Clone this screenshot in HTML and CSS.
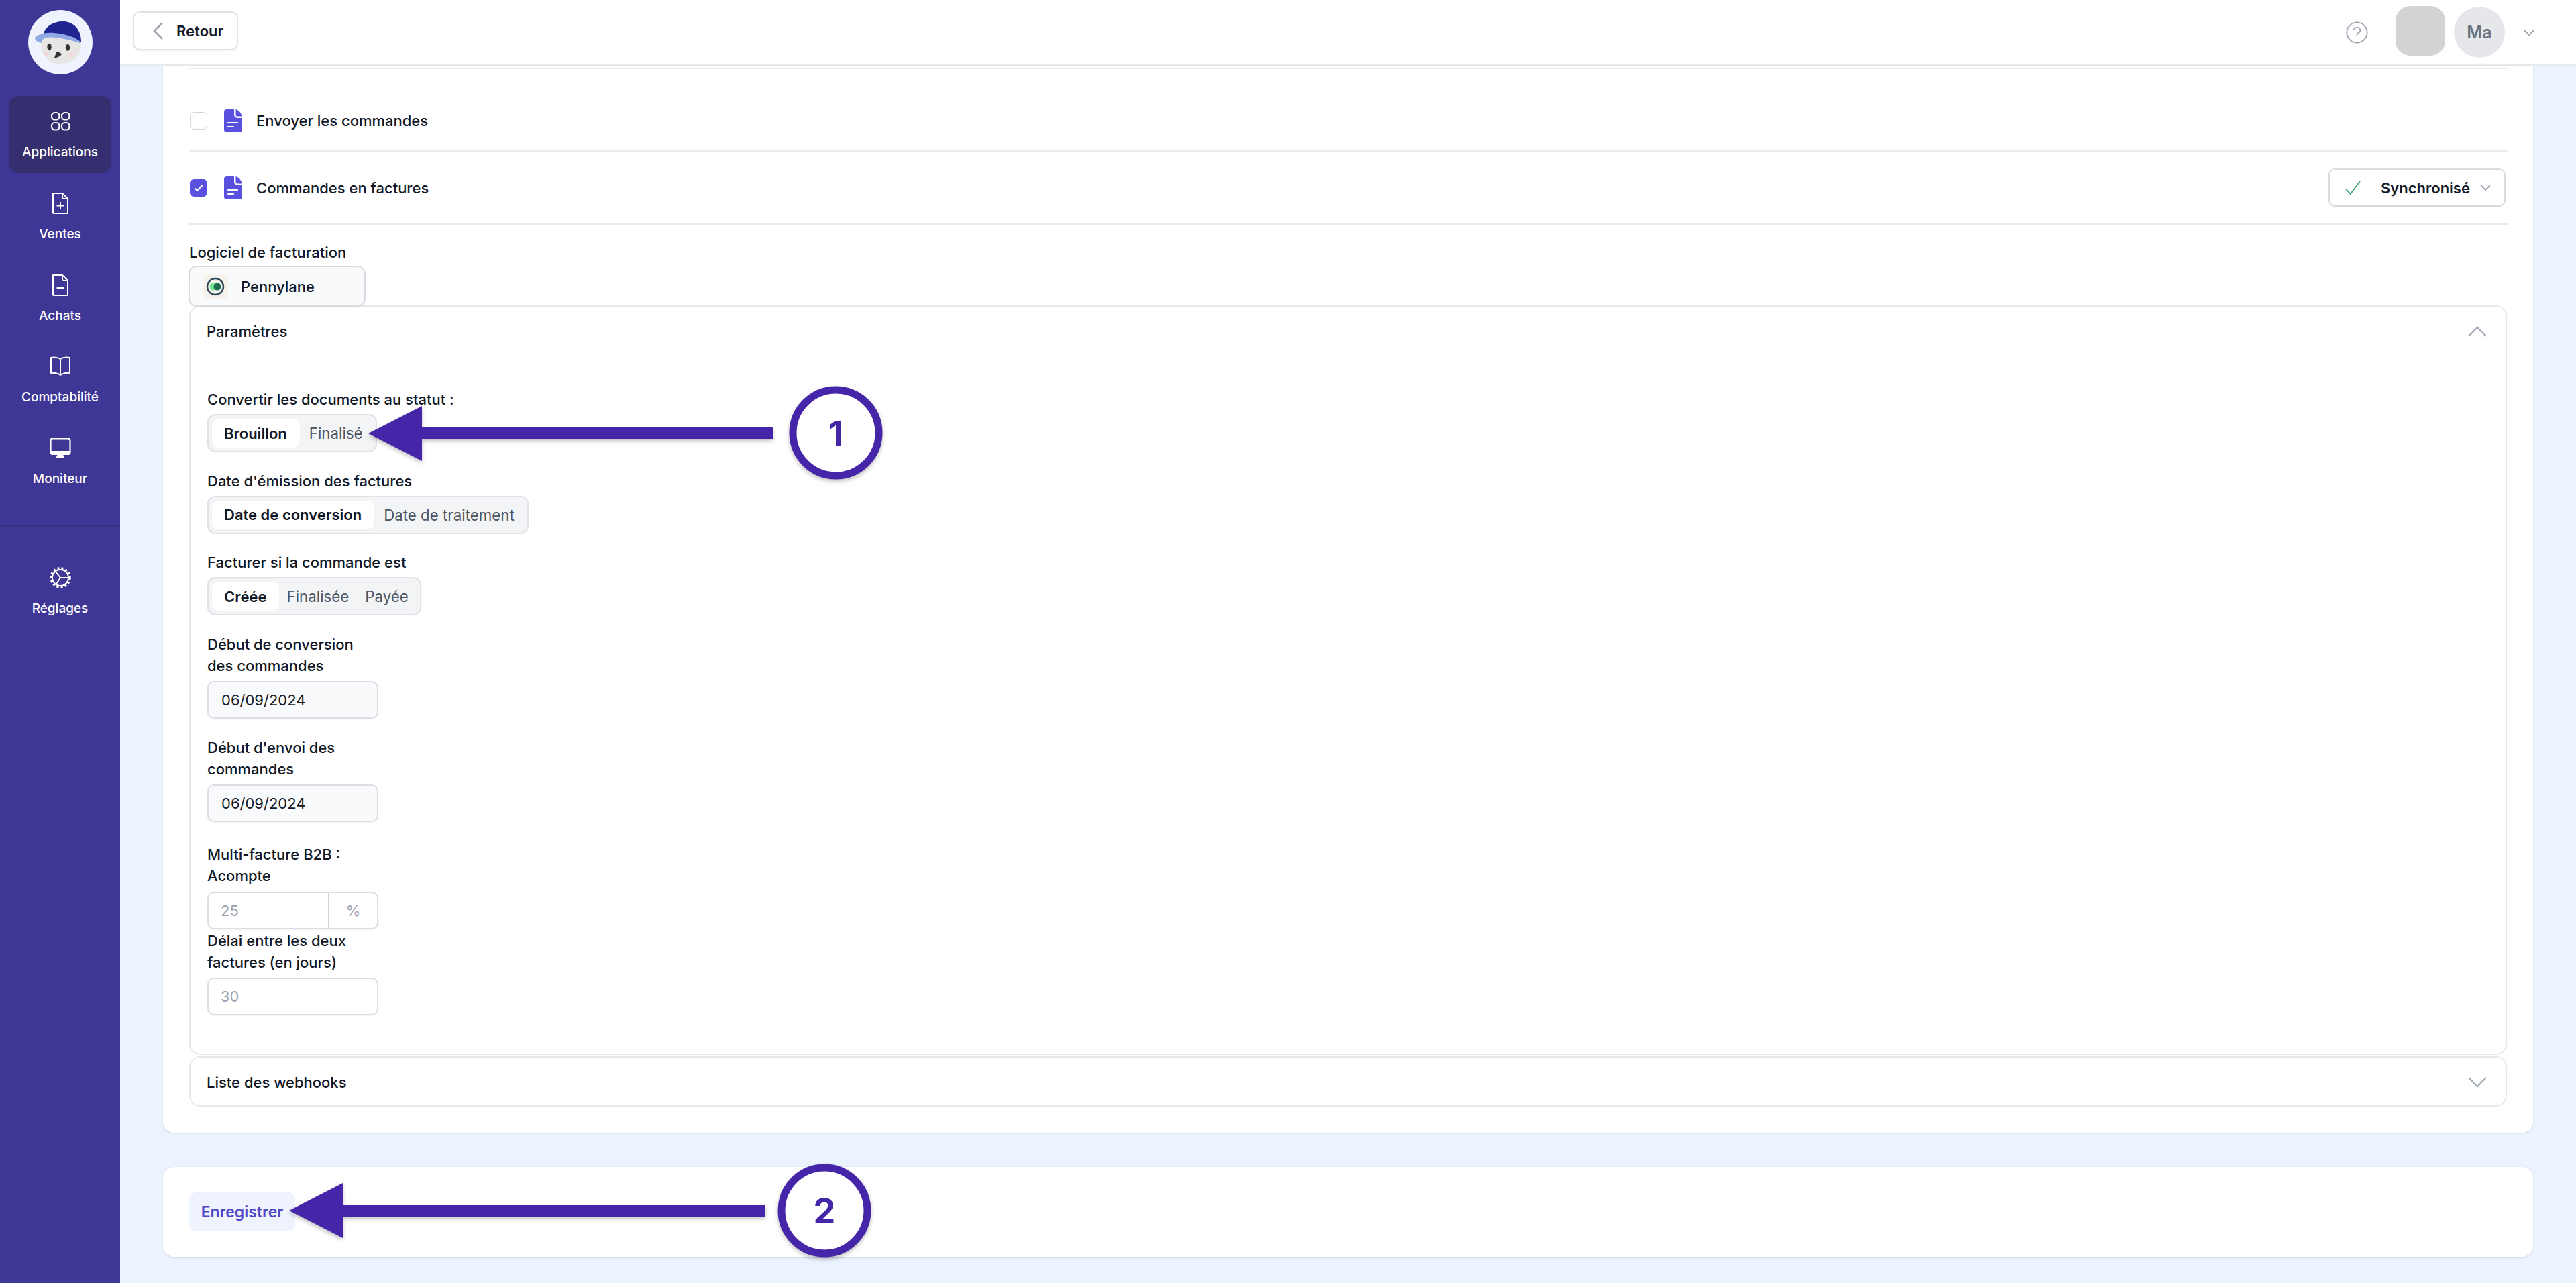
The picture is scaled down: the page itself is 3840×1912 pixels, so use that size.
FILE: index.html
```html
<!DOCTYPE html>
<html lang="fr">
  <head>
    <meta charset="UTF-8" />
    <meta name="viewport" content="width=device-width, initial-scale=1.0" />
    <title>Applications</title>
    <link rel="stylesheet" href="styles.css">
  </head>
  <body>
    <div class="app">
      <aside class="sidebar">
        <svg class="logo" viewBox="42 15 96 96">
          <circle cx="90" cy="63" r="48" fill="#eff3fe" />
          <circle cx="91" cy="66" r="30" fill="#e8e6e4" />
          <path d="M64 52c3-12 14-20 30-20 14 0 27 10 27 30l-2 1C100 52 84 49 64 52z" fill="#1f2490" />
          <path d="M52 57c3-6 16-9 28-8 16 1 32 6 40 13l-1 2C100 58 82 54 66 56l-5 8c-4-1-9-4-9-7z" fill="#8fa9e5" />
          <ellipse cx="73.500" cy="70" rx="3.200" ry="5.200" fill="#333" />
          <ellipse cx="101" cy="71" rx="3.200" ry="5" fill="#333" />
          <ellipse cx="69" cy="80.500" rx="3.500" ry="3" fill="#f5d5d6" />
          <ellipse cx="106" cy="82" rx="3.500" ry="3" fill="#f5d5d6" />
          <path d="M81 86l3-8c3-1 6 0 8 3-3 4-7 5-11 5z" fill="#333" />
        </svg>
        <nav class="nav">
          <a class="nav-item active">
            <svg class="nav-icon" viewBox="0 0 32 32" fill="none" stroke="#fff" stroke-width="2.200">
              <rect x="3" y="3" width="11.500" height="10.500" rx="4.500" />
              <rect x="18" y="3" width="11.500" height="10.500" rx="4.500" />
              <rect x="3" y="18" width="11.500" height="10.500" rx="4.500" />
              <rect x="18" y="18" width="11.500" height="10.500" rx="4.500" />
            </svg>
            <span>Applications</span>
          </a>
          <a class="nav-item">
            <svg class="nav-icon" viewBox="0 0 32 32" fill="none" stroke="#fff" stroke-width="2">
              <path d="M5 1h14l8 8v21a1 1 0 0 1-1 1H6a1 1 0 0 1-1-1z" stroke-linejoin="round" />
              <path d="M19 1v6a2 2 0 0 0 2 2h6M16 14v11M10.500 19.500h11" />
            </svg>
            <span>Ventes</span>
          </a>
          <a class="nav-item">
            <svg class="nav-icon" viewBox="0 0 32 32" fill="none" stroke="#fff" stroke-width="2">
              <path d="M5 1h14l8 8v21a1 1 0 0 1-1 1H6a1 1 0 0 1-1-1z" stroke-linejoin="round" />
              <path d="M19 1v6a2 2 0 0 0 2 2h6M10.500 20h11" />
            </svg>
            <span>Achats</span>
          </a>
          <a class="nav-item">
            <svg class="nav-icon" viewBox="0 0 32 32" fill="none" stroke="#fff" stroke-width="2" stroke-linejoin="round">
              <path d="M16 5c-3-2-8-3-14-2v23c6-1 10 0 14 3 4-3 8-4 14-3V3c-6-1-11 0-14 2zM16 5v24" />
            </svg>
            <span>Comptabilité</span>
          </a>
          <a class="nav-item">
            <svg class="nav-icon" viewBox="0 0 32 32" fill="none" stroke="#fff" stroke-width="2.200">
              <rect x="1.500" y="1.500" width="29" height="21" rx="3" />
              <path d="M1.500 21h29v1a3 3 0 0 1-3 3h-23a3 3 0 0 1-3-3z" fill="#fff" />
              <path d="M12 25h8l2 6H9z" fill="#fff" stroke="none" />
            </svg>
            <span>Moniteur</span>
          </a>
        </nav>
        <div class="nav-divider"></div>
        <a class="nav-item">
          <svg class="nav-icon" viewBox="0 0 32 32" fill="none" stroke="#fff" stroke-width="2">
            <circle cx="16" cy="16" r="12" />
            <circle cx="16" cy="16" r="14" stroke-width="3.500" stroke-dasharray="3 3.100" />
            <path d="M16 16L9 7M16 16h12M16 16l-6.500 10" />
          </svg>
          <span>Réglages</span>
        </a>
      </aside>

      <div class="main">
        <header class="topbar">
          <button class="back-btn">
            <svg class="back-icon" viewBox="0 0 18 28" fill="none" stroke="#9ca3af" stroke-width="2.500">
              <path d="M15 2L3 14l12 12" />
            </svg>
            Retour
          </button>
          <div class="topbar-right">
            <svg class="help-icon" viewBox="0 0 24 24" fill="none" stroke="#9ca3af" stroke-width="1.300">
              <path d="M8.600 9c.5-1.500 1.900-2.500 3.500-2.500 2 0 3.500 1.300 3.500 3 0 1.400-1 2.300-2.300 2.900-.8.400-1.300 1-1.300 1.900v.7M12 17.200v.6" />
              <circle cx="12" cy="12" r="11" />
            </svg>
            <div class="grey-square"></div>
            <div class="avatar">Ma</div>
            <svg class="chevron user-chevron" viewBox="0 0 16 10" fill="none" stroke="#9ca3af" stroke-width="1.800">
              <path d="M1 1l7 7 7-7" />
            </svg>
          </div>
        </header>

        <div class="content">
          <section class="card settings-card">
            <div class="row row-first">
              <span class="checkbox"></span>
              <svg class="doc-icon" viewBox="0 0 27 34">
                <path d="M4 0h11v8a5 5 0 0 0 5 5h7v17a4 4 0 0 1-4 4H4a4 4 0 0 1-4-4V4a4 4 0 0 1 4-4z" fill="#5a50e0" />
                <path d="M17.500 0c4 1 8 5 9.500 10.500h-7a2.500 2.500 0 0 1-2.500-2.500z" fill="#5a50e0" />
                <path d="M6 20h14M6 26h8" stroke="#fff" stroke-width="2.200" stroke-linecap="round" />
              </svg>
              <span class="row-title">Envoyer les commandes</span>
            </div>
            <div class="row row-second">
              <span class="checkbox checked">
                <svg viewBox="0 0 14 12" fill="none" stroke="#fff" stroke-width="2.200"><path d="M1.500 6.500l3.500 3.500 7.500-8" /></svg>
              </span>
              <svg class="doc-icon" viewBox="0 0 27 34">
                <path d="M4 0h11v8a5 5 0 0 0 5 5h7v17a4 4 0 0 1-4 4H4a4 4 0 0 1-4-4V4a4 4 0 0 1 4-4z" fill="#5a50e0" />
                <path d="M17.500 0c4 1 8 5 9.500 10.500h-7a2.500 2.500 0 0 1-2.500-2.500z" fill="#5a50e0" />
                <path d="M6 20h14M6 26h8" stroke="#fff" stroke-width="2.200" stroke-linecap="round" />
              </svg>
              <span class="row-title">Commandes en factures</span>
              <button class="sync-btn">
                <svg class="sync-check" viewBox="0 0 24 22" fill="none" stroke="#38a169" stroke-width="1.800"><path d="M1 13l7 8L23 1" /></svg>
                <span>Synchronisé</span>
                <svg class="chevron" viewBox="0 0 16 10" fill="none" stroke="#9ca3af" stroke-width="1.800"><path d="M1 1l7 7 7-7" /></svg>
              </button>
            </div>

            <div class="software">
              <div class="software-label">Logiciel de facturation</div>
              <div class="software-select">
                <span class="pl-tile">
                  <svg viewBox="0 0 28 28">
                    <circle cx="14" cy="14" r="12" fill="none" stroke="#2b4858" stroke-width="2.500" />
                    <circle cx="11" cy="14" r="5.500" fill="#71e88f" />
                    <circle cx="17" cy="14" r="5.500" fill="#1f6b50" />
                  </svg>
                </span>
                Pennylane
              </div>
            </div>

            <div class="accordion">
              <div class="accordion-head">
                <span>Paramètres</span>
                <svg class="acc-chevron" viewBox="0 0 28 16" fill="none" stroke="#9ca3af" stroke-width="2"><path d="M1 15L14 2l13 13" /></svg>
              </div>
              <div class="accordion-body">
                <div class="field">
                  <div class="field-label nowrap">Convertir les documents au statut :</div>
                  <div class="segment">
                    <span class="seg-tab on">Brouillon</span>
                    <span class="seg-tab">Finalisé</span>
                  </div>
                </div>
                <div class="field">
                  <div class="field-label nowrap">Date d'émission des factures</div>
                  <div class="segment">
                    <span class="seg-tab on">Date de conversion</span>
                    <span class="seg-tab">Date de traitement</span>
                  </div>
                </div>
                <div class="field">
                  <div class="field-label nowrap">Facturer si la commande est</div>
                  <div class="segment segment-three">
                    <span class="seg-tab on">Créée</span>
                    <span class="seg-tab">Finalisée</span>
                    <span class="seg-tab">Payée</span>
                  </div>
                </div>
                <div class="field">
                  <div class="field-label">Début de conversion des commandes</div>
                  <div class="input filled">06/09/2024</div>
                </div>
                <div class="field field-wide">
                  <div class="field-label">Début d'envoi des commandes</div>
                  <div class="input filled">06/09/2024</div>
                </div>
                <div class="field field-tight">
                  <div class="field-label">Multi-facture B2B : Acompte</div>
                  <div class="input input-group">
                    <span class="input-value">25</span>
                    <span class="input-unit">%</span>
                  </div>
                </div>
                <div class="field">
                  <div class="field-label">Délai entre les deux factures (en jours)</div>
                  <div class="input"><span class="input-value">30</span></div>
                </div>
              </div>
            </div>

            <div class="accordion accordion-closed">
              <div class="accordion-head">
                <span>Liste des webhooks</span>
                <svg class="acc-chevron" viewBox="0 0 28 16" fill="none" stroke="#9ca3af" stroke-width="2"><path d="M1 1l13 13L27 1" /></svg>
              </div>
            </div>
          </section>

          <section class="card save-card">
            <button class="save-btn">Enregistrer</button>
          </section>
        </div>
      </div>

      <!-- annotations posees sur la capture -->
      <div class="callout callout-one">
        <svg viewBox="0 0 780 140">
          <path d="M0 70L80 29v32h523v17H80v33z" />
          <circle cx="697" cy="69" r="64" />
        </svg>
        <span class="callout-num">1</span>
      </div>
      <div class="callout callout-two">
        <svg viewBox="0 0 780 140">
          <path d="M0 70L80 29v33h630v17H80v32z" />
          <circle cx="798" cy="70" r="64" />
        </svg>
        <span class="callout-num">2</span>
      </div>
    </div>
  </body>
</html>
```

FILE: styles.css
```css
* {
  box-sizing: border-box;
}
html,
body {
  margin: 0;
  height: 100%;
  overflow: hidden;
}
body {
  font-family: Inter, "Noto Sans", sans-serif;
  font-size: 22px;
  color: #111827;
  background: #ebf3fe;
}
button {
  font-family: inherit;
}
.app {
  position: relative;
  display: flex;
  height: 1912px;
}

/* sidebar */
.sidebar {
  width: 179px;
  flex: none;
  background: #3f3795;
  padding: 15px 13px 0;
  display: flex;
  flex-direction: column;
  align-items: center;
}
.logo {
  width: 96px;
  height: 96px;
  flex: none;
  margin-bottom: 32px;
}
.nav {
  display: flex;
  flex-direction: column;
  gap: 6.750px;
  width: 100%;
}
.nav-item {
  display: flex;
  flex-direction: column;
  align-items: center;
  height: 115px;
  width: 100%;
  padding-top: 22px;
  border-radius: 14px;
  color: #fff;
  font-size: 19px;
  font-weight: 500;
}
.nav-item.active {
  background: #352f70;
}
.nav-icon {
  width: 32px;
  height: 32px;
  margin-bottom: 18px;
}
.nav-divider {
  height: 1px;
  width: 179px;
  margin: 38px 0 39px;
  background: #352f70;
  flex: none;
}

/* header */
.main {
  flex: 1;
  min-width: 0;
  display: flex;
  flex-direction: column;
}
.topbar {
  height: 98px;
  flex: none;
  display: flex;
  align-items: center;
  justify-content: space-between;
  background: #fff;
  border-bottom: 2px solid #e7eaee;
  padding: 0 62px 4px 19px;
}
.back-btn {
  display: flex;
  align-items: center;
  width: 157px;
  height: 58px;
  padding: 0 0 0 27px;
  background: #fff;
  border: 2px solid #e0e2e7;
  border-radius: 10px;
  font-size: 22px;
  font-weight: 600;
  color: #111827;
  box-shadow: 0 1px 2px #0000000d;
}
.back-icon {
  width: 18px;
  height: 28px;
  margin-right: 18px;
}
.topbar-right {
  display: flex;
  align-items: center;
}
.help-icon {
  width: 33px;
  height: 33px;
  margin-right: 41px;
  margin-top: 4px;
}
.grey-square {
  width: 74px;
  height: 74px;
  border-radius: 22px;
  background: #d3d3d3;
  margin-right: 13px;
}
.avatar {
  width: 76px;
  height: 76px;
  border-radius: 50%;
  background: #e5e7eb;
  color: #6b7280;
  font-size: 25px;
  font-weight: 600;
  display: flex;
  align-items: center;
  justify-content: center;
  margin-top: 4px;
}
.chevron {
  width: 16px;
  height: 10px;
  flex: none;
}
.user-chevron {
  margin-left: 28px;
  margin-top: 6px;
}

/* cards */
.content {
  padding: 0 64px;
  display: flex;
  flex-direction: column;
  gap: 51px;
}
.card {
  background: #fff;
  border-radius: 16px;
  box-shadow: 0 1px 3px #0000001f;
}
.settings-card {
  border-radius: 0 0 16px 16px;
  padding: 3px 38px 39px 39px;
}
.row {
  display: flex;
  align-items: center;
  font-weight: 500;
  border-bottom: 2px solid #e9ebef;
}
.row-first {
  height: 125px;
  padding-top: 32px;
  border-top: 2px solid #e9ebef;
}
.row-second {
  height: 109px;
}
.checkbox {
  width: 26px;
  height: 26px;
  border: 1.500px solid #d1d5db;
  border-radius: 6px;
  margin-left: 1px;
  flex: none;
  display: flex;
  align-items: center;
  justify-content: center;
}
.checkbox.checked {
  background: #5a50e0;
  border-color: #5a50e0;
}
.checkbox svg {
  width: 14px;
  height: 12px;
}
.doc-icon {
  width: 27px;
  height: 34px;
  margin: 0 21px 0 25px;
  flex: none;
}
.sync-btn {
  margin-left: auto;
  margin-right: 3px;
  width: 264px;
  height: 57px;
  display: flex;
  align-items: center;
  padding: 0 20px 0 23px;
  background: #fff;
  border: 2px solid #d9dbe1;
  border-radius: 10px;
  font-size: 22px;
  font-weight: 600;
  color: #111827;
  box-shadow: 0 1px 2px #0000000d;
}
.sync-check {
  width: 23px;
  height: 21px;
  margin-right: 30px;
}
.sync-btn .chevron {
  margin-left: auto;
}
.software {
  padding-top: 25px;
}
.software-label {
  line-height: 32px;
  margin-bottom: 4px;
  font-weight: 500;
}
.software-select {
  display: flex;
  align-items: center;
  width: 264px;
  height: 61px;
  margin-left: -1px;
  padding-left: 19px;
  background: #f9fafb;
  border: 2px solid #d9dbe1;
  border-radius: 12px;
  font-weight: 500;
  position: relative;
  z-index: 1;
}
.pl-tile {
  width: 38px;
  height: 38px;
  border-radius: 7px;
  background: #f6f2ec;
  display: flex;
  align-items: center;
  justify-content: center;
  margin-right: 19px;
}
.pl-tile svg {
  width: 28px;
  height: 28px;
}

/* accordions */
.accordion {
  border: 2px solid #e7e8ee;
  border-radius: 16px;
  height: 1117px;
  margin-top: -2px;
  margin-right: 1px;
}
.accordion-closed {
  height: 75px;
  margin-top: 2px;
}
.accordion-head {
  display: flex;
  align-items: center;
  justify-content: space-between;
  height: 73px;
  padding: 0 28px 0 24px;
  font-weight: 500;
}
.acc-chevron {
  width: 28px;
  height: 16px;
}
.accordion-body {
  padding: 49px 0 0 25px;
}
.field {
  margin-bottom: 26.500px;
}
.field-wide {
  margin-bottom: 32px;
}
.field-tight {
  margin-bottom: 1px;
}
.field-label {
  width: 235px;
  line-height: 32px;
  margin-bottom: 7.500px;
  font-weight: 500;
}
.nowrap {
  width: auto;
  white-space: nowrap;
  margin-bottom: 6px;
}
.segment {
  display: inline-flex;
  vertical-align: top;
  height: 57px;
  padding: 5px;
  background: #f3f4f6;
  border: 2px solid #e0e2e7;
  border-radius: 12px;
  color: #4b5563;
}
.seg-tab {
  display: flex;
  align-items: center;
  padding: 0 14px;
  font-size: 22.300px;
}
.seg-tab.on {
  background: #fff;
  border-radius: 10px;
  padding: 0 19px 0 18px;
  color: #111827;
  font-size: 22px;
  font-weight: 600;
}
.segment-three .seg-tab {
  padding: 0 12px;
}
.segment-three .seg-tab.on {
  padding: 0 18px;
}
.input {
  width: 255px;
  height: 56px;
  display: flex;
  align-items: center;
  border: 2px solid #dcdee4;
  border-radius: 10px;
  background: #fff;
  box-shadow: 0 1px 2px #0000000d;
}
.input.filled {
  background: #f9fafb;
  padding-left: 19px;
  color: #111827;
}
.input-value {
  flex: 1;
  padding-left: 18px;
  color: #9ca3af;
}
.input-unit {
  width: 73px;
  height: 100%;
  display: flex;
  align-items: center;
  justify-content: center;
  border-left: 2px solid #d1d5db;
  color: #9ca3af;
}
.save-card {
  padding: 38px 39px;
  height: 134px;
}
.save-btn {
  width: 158px;
  height: 58px;
  padding: 0;
  border: 0;
  border-radius: 10px;
  background: #eff3fe;
  color: #4f46c8;
  font-size: 23px;
  font-weight: 600;
}

/* fleches */
.callout {
  position: absolute;
  pointer-events: none;
}
.callout svg {
  display: block;
  width: 780px;
  height: 140px;
  overflow: visible;
  filter: drop-shadow(0 3px 3px #00000040);
}
.callout path {
  fill: #4526a8;
}
.callout circle {
  fill: #fff;
  stroke: #4526a8;
  stroke-width: 11;
}
.callout-one {
  left: 549px;
  top: 576px;
}
.callout-two {
  left: 431px;
  top: 1734px;
}
.callout-num {
  position: absolute;
  top: 0;
  width: 128px;
  height: 140px;
  display: flex;
  align-items: center;
  justify-content: center;
  color: #4526a8;
  font-size: 52px;
  font-weight: 700;
}
.callout-one .callout-num {
  left: 633px;
}
.callout-two .callout-num {
  left: 734px;
}
```
